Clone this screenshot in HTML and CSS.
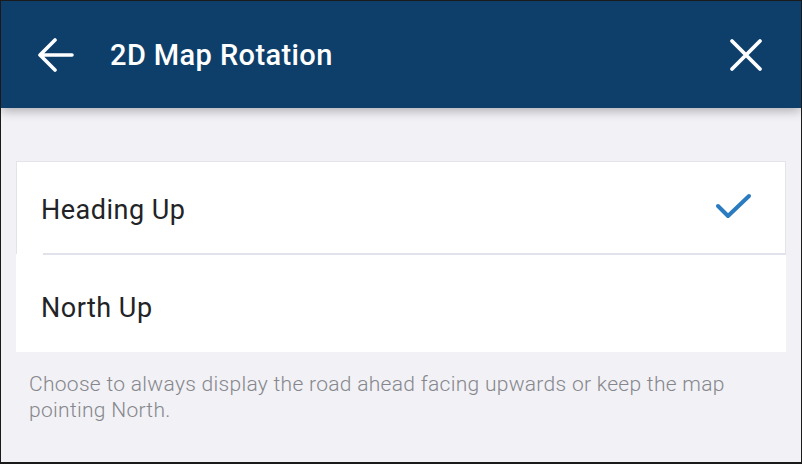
FILE: index.html
```html
<!DOCTYPE html>
<html>
<head>
<meta charset="utf-8">
<link rel="stylesheet" href="styles.css">
</head>
<body>
<div class="screen">
  <header class="topbar">
    <button class="icon-btn back" aria-label="Back">
      <svg width="36" height="36" viewBox="0 0 36 36"><path d="M34 17 H3 M17 2 L2 17 L17 32" fill="none" stroke="#fff" stroke-width="3.6" stroke-linecap="round" stroke-linejoin="round"/></svg>
    </button>
    <h1 class="title">2D Map Rotation</h1>
    <button class="icon-btn close" aria-label="Close">
      <svg width="34" height="34" viewBox="0 0 34 34"><path d="M3 3 L31 31 M31 3 L3 31" fill="none" stroke="#fff" stroke-width="3.8" stroke-linecap="round"/></svg>
    </button>
  </header>
  <main class="content">
    <ul class="options">
      <li class="option selected">
        <span class="label">Heading Up</span>
        <svg class="check" width="38" height="28" viewBox="0 0 38 28"><path d="M3 14 L13 24 L34 4" fill="none" stroke="#2b7bc0" stroke-width="4" stroke-linecap="round" stroke-linejoin="round"/></svg>
      </li>
      <li class="option">
        <span class="label">North Up</span>
      </li>
    </ul>
    <p class="hint">Choose to always display the road ahead facing upwards or keep the map pointing North.</p>
  </main>
</div>
</body>
</html>
```
FILE: styles.css
```css
* { box-sizing: border-box; }
html, body { margin: 0; padding: 0; }
body { font-family: Roboto, "Noto Sans", sans-serif; background: #f1f1f6; }
.screen {
  width: 802px;
  height: 464px;
  border-style: solid;
  border-color: #1a1a1a;
  border-width: 1px 1px 2px 1px;
  background: #f1f1f6;
  overflow: hidden;
  display: flex;
  flex-direction: column;
}
.topbar {
  height: 107px;
  flex: none;
  background: #0e3f6b;
  display: flex;
  align-items: center;
  padding: 0 38px 0 37px;
  box-shadow: 0 3px 10px rgba(0,0,0,0.28);
  position: relative;
  z-index: 1;
}
.icon-btn {
  border: 0;
  background: none;
  padding: 0;
  display: flex;
  cursor: pointer;
}
.back { margin-top: 2px; }
.title {
  margin: 0 0 0 36px;
  color: #fff;
  font-size: 29px;
  font-weight: 500;
  letter-spacing: 0.4px;
  flex: 1;
}
.close { margin-top: 1px; }
.content {
  padding: 53px 15px 0 15px;
}
.options {
  list-style: none;
  margin: 0;
  padding: 0;
  background: #fff;
}
.option {
  height: 93px;
  display: flex;
  align-items: center;
  justify-content: space-between;
  padding: 0 32px 0 24px;
  position: relative;
}
.option.selected {
  border: 1px solid #e3e3ea;
  border-bottom: 0;
  height: 93px;
}
.option.selected::after {
  content: "";
  position: absolute;
  left: 26px;
  right: -1px;
  bottom: -1px;
  height: 2px;
  background: #e2e2ea;
}
.option + .option { height: 98px; padding-top: 6px; padding-left: 25px; }
.label {
  font-size: 27px;
  letter-spacing: 0.5px;
  color: #222326;
  padding-top: 4px;
}
.check { margin-top: -4px; }
.hint {
  margin: 19px 0 0 13px;
  font-size: 21px;
  font-weight: 300;
  letter-spacing: 0.3px;
  line-height: 26px;
  color: #86878c;
  max-width: 745px;
}
```
